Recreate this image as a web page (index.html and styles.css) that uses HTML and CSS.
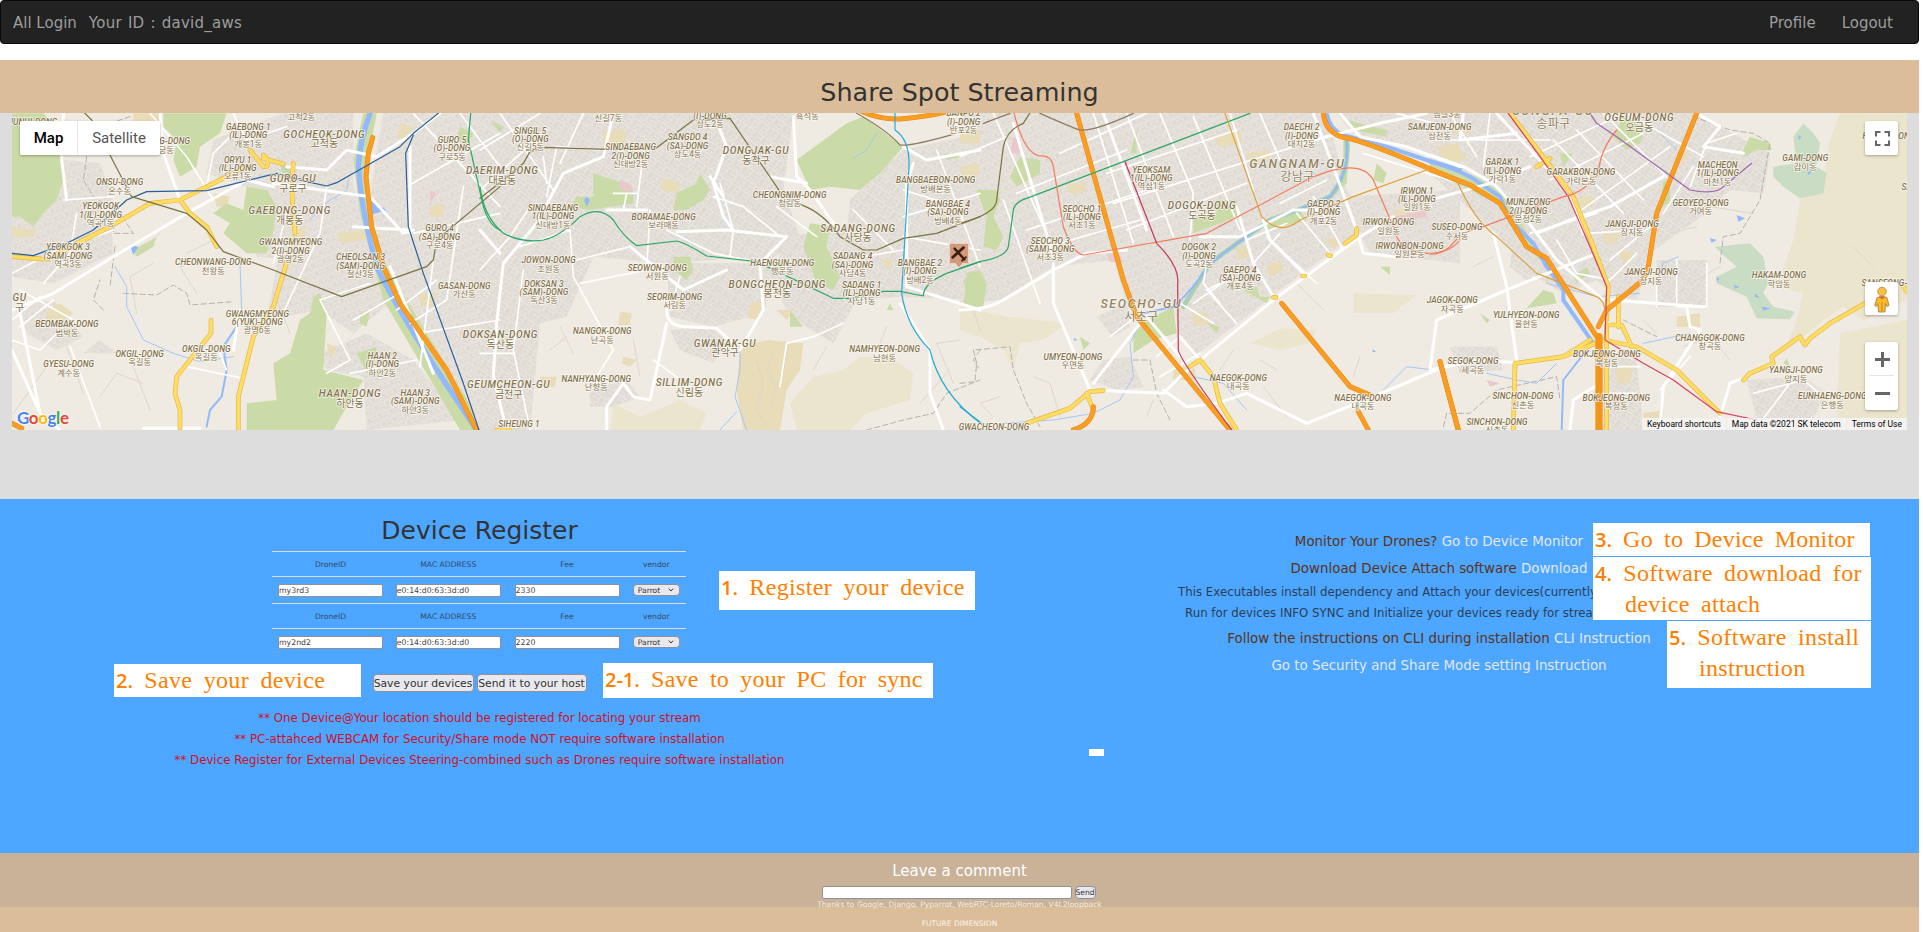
FILE: index.html
```html
<!DOCTYPE html>
<html lang="en">
<head>
<meta charset="utf-8">
<title>Share Spot Streaming</title>
<link rel="stylesheet" href="styles.css">
</head>
<body>
<div class="page">
  <nav class="navbar">
    <a class="nav-link">All Login</a>
    <span class="nav-user">Your ID : david_aws</span>
    <a class="nav-link push">Profile</a>
    <a class="nav-link">Logout</a>
  </nav>

  <header class="banner"><h1>Share Spot Streaming</h1></header>

  <section class="map-section">
    <div class="map">
      <svg class="map-canvas" id="map" viewBox="12 113 1895 317" width="1895" height="317"></svg>
      <div class="map-types"><button class="map-type active">Map</button><button class="map-type">Satellite</button></div>
      <div class="map-btn fullscreen">
        <svg width="33" height="34" viewBox="0 0 33 34"><path d="M11 15.500v-4.500h4.500M19.500 11h4.500v4.500M24 19.500v4.500h-4.500M15.500 24h-4.500v-4.500" fill="none" stroke="#666" stroke-width="2"/></svg>
      </div>
      <div class="map-btn pegman">
        <svg width="33" height="33" viewBox="0 0 33 33"><path d="M12 15.500q5-2 10 0l2 8-2 1-1.500-3-.5 8.500h-6.500l-.8-8.500-1.200 3-1.800-1z" fill="#fbb829" stroke="#a97a3c" stroke-width=".8"/><path d="M17 20v9" stroke="#c58a2a"/><path d="M13.500 14.500h7l-3.500 3z" fill="#d9652b"/><circle cx="17" cy="9.500" r="4.300" fill="#fcc13c" stroke="#b5813a" stroke-width=".8"/></svg>
      </div>
      <div class="map-btn zoom">
        <svg width="33" height="68" viewBox="0 0 33 68"><path d="M10 17.500h15M17.500 10v15M10 51.500h15" stroke="#666" stroke-width="3"/><path d="M4 33.500h25" stroke="#e6e6e6"/></svg>
      </div>
      <div class="google"><span class="b">G</span><span class="r">o</span><span class="y">o</span><span class="b">g</span><span class="g">l</span><span class="r">e</span></div>
      <div class="map-terms"><span>Keyboard shortcuts</span><span>Map data ©2021 SK telecom</span><span>Terms of Use</span></div>
    </div>
  </section>

  <main class="panel">
    <section class="register">
      <h2>Device Register</h2>
      <div class="devices">
        <div class="row head"><span>DroneID</span><span>MAC ADDRESS</span><span>Fee</span><span>vendor</span></div>
        <div class="row"><input value="my3rd3"><input value="e0:14:d0:63:3d:d0"><input value="2330"><div class="select">Parrot<svg width="6" height="4" viewBox="0 0 6 4"><path d="M.8.600L3 3 5.200.600" fill="none" stroke="#333"/></svg></div></div>
        <div class="row head"><span>DroneID</span><span>MAC ADDRESS</span><span>Fee</span><span>vendor</span></div>
        <div class="row"><input value="my2nd2"><input value="e0:14:d0:63:3d:d0"><input value="2220"><div class="select">Parrot<svg width="6" height="4" viewBox="0 0 6 4"><path d="M.8.600L3 3 5.200.600" fill="none" stroke="#333"/></svg></div></div>
      </div>
      <div class="actions"><button class="btn save">Save your devices</button><button class="btn send-host">Send it to your host</button></div>
      <div class="notices">
        <p>** One Device@Your location should be registered for locating your stream</p>
        <p>** PC-attahced WEBCAM for Security/Share mode NOT require software installation</p>
        <p>** Device Register for External Devices Steering-combined such as Drones require software installation</p>
      </div>
    </section>

    <section class="guide">
      <p class="lead">Monitor Your Drones? <a>Go to Device Monitor</a></p>
      <p class="lead">Download Device Attach software <a>Download</a></p>
      <p class="detail first">This Executables install dependency and Attach your devices(currently</p>
      <p class="detail second">Run for devices INFO SYNC and Initialize your devices ready for streaming</p>
      <p class="lead">Follow the instructions on CLI during installation <a>CLI Instruction</a></p>
      <p class="lead"><a>Go to Security and Share Mode setting Instruction</a></p>
      <div class="stub"></div>
    </section>

    <div class="note n1"><b>1.</b> Register your device</div>
    <div class="note n2"><b>2.</b> Save your device</div>
    <div class="note n21"><b>2-1.</b> Save to your PC for sync</div>
    <div class="note n3"><b>3.</b> Go to Device Monitor</div>
    <div class="note n4"><b>4.</b> Software download for<br><span class="indent">device attach</span></div>
    <div class="note n5"><b>5.</b> Software install<br><span class="indent">instruction</span></div>
  </main>

  <section class="comment">
    <h3>Leave a comment</h3>
    <form class="comment-form"><input><button type="button" class="btn">Send</button></form>
    <p>Thanks to Google, Django, Pyparrot, WebRTC-Loreto/Roman, V4L2loopback</p>
  </section>
  <footer class="footer">FUTURE DIMENSION</footer>
</div>
<script src="map.js"></script>
</body>
</html>
```

FILE: styles.css
```css
* { box-sizing: border-box; }
body { margin: 0; background: #fff; font-family: "DejaVu Sans", sans-serif; overflow: hidden; }
h1, h2, h3, p { margin: 0; font-weight: 400; }
.page { width: 1919px; height: 932px; overflow: hidden; }

.navbar { display: flex; align-items: center; height: 44px; padding: 1px 25px 0 12px; background: #222; border: 1px solid #080808; border-radius: 4px; color: #9d9d9d; font-size: 15px; margin-bottom: 16px; }
.nav-user { margin-left: 12px; letter-spacing: .25px; word-spacing: 1px; }
.push { margin-left: auto; margin-right: 26px; }

.banner { height: 53px; background: #dbbd9a; text-align: center; }
.banner h1 { font-size: 25.400px; line-height: 31px; padding-top: 17px; color: #333; }

.map-section { height: 386px; padding: 0 12px; background: #ddd; }
.map { position: relative; width: 1895px; height: 317px; overflow: hidden; background: #efebe2; }
.map-canvas { display: block; }
.map-types { position: absolute; left: 8px; top: 8px; display: flex; box-shadow: 0 1px 3px rgba(0,0,0,.3); border-radius: 2px; }
.map-type { border: 0; height: 34px; width: 82px; padding: 0; background: #fff; color: #565656; font: 15px Roboto, sans-serif; border-radius: 0 2px 2px 0; }
.map-type.active { width: 58px; color: #000; font-weight: 500; border-right: 1px solid #e6e6e6; border-radius: 2px 0 0 2px; }
.map-btn { position: absolute; left: 1853px; width: 33px; background: #fff; border-radius: 2px; box-shadow: 0 1px 3px rgba(0,0,0,.3); }
.map-btn svg { display: block; }
.fullscreen { top: 8px; height: 34px; }
.pegman { top: 169px; height: 33px; }
.zoom { top: 229px; height: 68px; }
.google { position: absolute; left: 5px; bottom: 1px; font: 17px/22px Lato, sans-serif; font-weight: 700; letter-spacing: -.4px; text-shadow: 0 0 2px #fff, 0 0 2px #fff; }
.google .b { color: #4285f4; } .google .r { color: #ea4335; } .google .y { color: #fbbc05; } .google .g { color: #34a853; }
.map-terms { position: absolute; right: 0; bottom: 0; display: flex; justify-content: flex-end; height: 12px; gap: 1px; font: 8.500px/12px Roboto, sans-serif; color: #000; white-space: nowrap; }
.map-terms span { background: rgba(245,245,245,.75); padding: 0 5px; }

.panel { position: relative; display: grid; grid-template-columns: 959px 960px; height: 354px; background: #4da6ff; }
.register { padding-top: 16px; }
.register h2 { text-align: center; font-size: 25px; line-height: 31px; color: #333; }
.devices { width: 414px; margin: 5px auto 0 272px; font-size: 7.600px; }
.row { display: grid; grid-template-columns: 117px 118.500px 119px 59.500px; height: 27px; border-top: 1px solid #ddd; padding-top: 7px; justify-items: center; color: #333; }
.row.head { height: 25px; padding-top: 0; line-height: 25px; color: #2f4a68; }
.row input, .comment-form input { width: 105px; height: 13px; padding: 0; border: 1px solid #8f8f9d; border-radius: 2px; background: #fff; font: 7.800px "DejaVu Sans", sans-serif; color: #444; outline: 0; }
.select { display: flex; align-items: center; justify-content: space-between; width: 47px; height: 12px; padding: 0 5px 0 4px; border: 1px solid #8f8f9d; border-radius: 4px; background: #e9e9ed; color: #333; }
.actions { display: flex; justify-content: center; gap: 3px; margin-top: 19px; }
.btn { border: 1px solid #8f8f9d; border-radius: 4px; background: #e9e9ed; color: #333; padding: 0; font-family: inherit; white-space: nowrap; }
.actions .btn { height: 18px; width: 101px; font-size: 10.800px; line-height: 17px; }
.actions .send-host { width: 110px; }
.notices { margin-top: 16px; text-align: center; font-size: 11.800px; line-height: 21px; color: #cf1126; }

.guide { padding-top: 29px; text-align: center; white-space: nowrap; }
.lead { font-size: 13.400px; line-height: 27px; color: #5c3317; }
.lead a { color: #e3e8f0; }
.detail { text-align: left; margin-left: 219px; font-size: 11.800px; line-height: 20px; color: #2b3f55; }
.detail.second { margin-left: 226px; line-height: 23px; }
.stub { width: 15px; height: 7px; margin: 70px 0 0 130px; background: #fff; }

.note { position: absolute; background: #fff; color: #ff8000; font: 24px/31px "Liberation Serif", serif; letter-spacing: .35px; word-spacing: 5px; white-space: nowrap; padding: 1px 0 0 2px; }
.note b { font: 600 20px "Open Sans", sans-serif; letter-spacing: 0; }
.indent { margin-left: 30px; }
.n1 { left: 719px; top: 72px; width: 256px; height: 39px; }
.n2 { left: 114px; top: 165px; width: 247px; height: 33px; }
.n21 { left: 603px; top: 164px; width: 330px; height: 35px; letter-spacing: .25px; }
.n3 { left: 1593px; top: 24px; width: 277px; height: 33px; letter-spacing: .2px; }
.n4 { left: 1593px; top: 58px; width: 278px; height: 63px; }
.n5 { left: 1667px; top: 122px; width: 204px; height: 67px; }

.comment { height: 54px; padding-top: 9px; background: #c9b297; text-align: center; color: #fff; }
.comment h3 { font-size: 15px; line-height: 18px; }
.comment-form { display: flex; justify-content: center; gap: 3px; margin: 6px 2px 0 0; }
.comment-form input { width: 250px; }
.comment-form .btn { width: 21px; height: 13px; font-size: 7.600px; line-height: 12px; }
.comment p { font-size: 7.600px; line-height: 11px; color: #f6ece0; position: relative; }
.footer { height: 25px; background: #dbbd9a; text-align: center; font-size: 7.500px; line-height: 33px; color: #fbf3e8; }

.streets path { fill: none; stroke-linecap: round; stroke-linejoin: round; }
.labels text { font-family: Roboto, "Noto Sans CJK KR", sans-serif; font-weight: 500; text-anchor: middle; fill: #84724e; stroke: #fbf9f3; stroke-width: 4px; stroke-linejoin: round; paint-order: stroke; }
.labels .en { font-style: italic; }
.labels .ko { font-weight: 400; }
```

FILE: map.js
```js
// Map sheets: each sheet has its own origin; units are a third of a pixel.
const origins = [[0, 0], [480, 50], [960, 50], [1430, 0]];

const layers = [
  { fill: '#ebe5cd', items: [
    [1, 'M400 1060L480 1100 600 1050 680 1090 660 1140 390 1140Z M930 1060L1000 980 1090 960 1140 920 1240 930 1300 970 1290 1050 1160 1090 1110 1140 950 1140Z'],
    [2, 'M0 760L40 780 150 800 320 820 250 870 180 880 160 960 130 900 60 860 0 840Z M870 880L960 835 1070 840 1050 880 960 900Z M1180 730L1370 735 1300 790 1180 790Z'],
    [3, 'M1230 340H1431V900L1300 960 1240 920 1180 960 1060 1060 1100 960 1120 880 1040 860 1090 720 1110 600 1180 540 1200 420Z M1230 1000L1431 960V1255H1220Z'] ] },
  { fill: '#dfdad4', items: [
    [0, 'M36 580L170 570 330 640 340 760 160 850 36 830Z M190 480L300 490 340 600 230 640 180 600Z M640 420L850 340 1060 340 1060 640 900 780 770 770 740 560 620 520Z M860 640L1060 560 1140 740 1180 900 1060 1000 960 930 800 960Z M1150 340L1500 340 1500 1290 1430 1290 1160 850 1110 600 1130 450Z M960 1060L1100 1000 1240 1080 1380 1260 1100 1290 1090 1130 980 1110Z M60 920L160 900 250 1010 170 1050 80 1000Z M300 1020L350 1060 250 1060Z'],
    [1, 'M0 190L690 190 700 540 900 570 840 620 560 640 340 620 260 800 180 820 150 1140 0 1140Z M470 190L940 190 910 420 960 560 860 640 560 560 460 480Z M560 640L900 640 850 790 700 830 570 800Z M910 560L1060 540 1260 560 1260 740 1130 750 1060 880 930 800 880 700Z M1110 450L1270 300 1500 250 1500 750 1260 740 1100 560Z M330 1020L440 990 480 1040 400 1070 330 1070Z M570 840L690 830 740 870 700 940 600 900Z'],
    [2, 'M0 190L1100 190 1160 420 1230 520 940 735 860 800 700 920 660 860 640 760 500 760 460 630 280 650 120 750 0 760Z M430 930L510 920 550 1010 470 1020 390 990Z M1130 190L1500 190 1500 340 1180 250Z M1140 440L1500 420 1500 640 1230 610Z M410 800L500 760 510 830 460 860Z'],
    [3, 'M0 340L790 340 1020 460 1000 580 900 570 800 660 660 760 620 900 540 880 500 840 400 880 300 820 200 700 0 520Z M680 780L830 780 830 920 680 920Z M500 1060L620 1080 640 1290 510 1290Z M60 1040L200 1040 220 1110 90 1120Z M950 1140L1120 1130 1190 1180 1150 1255 980 1255Z M250 720L330 760 300 850 240 800Z'] ] },
  { fill: '#e9dcb9', items: [
    [0, 'M400 340L480 340 480 365 400 365Z M36 680L110 690 100 710 36 710Z M140 930L180 910 220 940 190 960 140 960Z M640 580L690 590 680 620 650 620Z M1200 370L1240 380 1220 430 1190 410Z M1010 700L1100 690 1100 720 1020 730Z M880 690L920 680 900 740 870 730Z M1290 620L1330 610 1330 650 1290 650Z M980 1030L1010 1040 990 1080Z M1260 880L1310 880 1300 920 1260 920Z'],
    [1, 'M780 890L860 870 970 880 960 960 920 1020 900 1140 790 1140 770 1020Z M370 240L440 240 430 300 370 300Z M420 785L455 790 450 825 415 825Z M550 385L600 400 590 430 540 420Z M810 760L850 750 840 810 805 805Z M430 920L470 930 450 950 425 940Z M890 780L940 780 920 810Z M180 980L230 980 225 1010 190 1010Z M1200 630L1240 630 1230 660Z M1440 250L1500 240 1500 280 1440 280Z'],
    [2, 'M0 350L50 340 60 370 10 390Z M760 265L840 240 850 280 780 290Z M320 400L380 400 370 430 330 430Z M700 790L740 785 750 820 700 830Z M860 310L930 300 930 330 870 340Z M640 960L700 940 710 990 640 990Z M1300 480L1360 470 1350 510 1300 500Z M1090 570L1130 560 1130 600Z M830 590L870 590 880 620 830 630Z M920 650L960 630 970 660 930 680Z'],
    [3, 'M60 370L130 370 120 400 70 400Z M740 950L810 940 810 980 740 980Z M520 700L570 700 560 730 520 730Z M20 440L80 430 110 480 40 490Z M740 460L780 450 760 490Z M560 1100L610 1090 600 1150 560 1150Z M640 1240L700 1230 700 1255 640 1255Z M440 590L490 590 490 620 450 620Z M570 750L610 760 600 790 570 780Z'] ] },
  { fill: '#cadba7', items: [
    [0, 'M36 440L180 450 190 540 170 600 130 640 100 680 60 650 36 650Z M36 340L130 340 180 400 180 460 36 440Z M490 340L680 340 660 400 600 440 590 500 540 530 520 480 530 420 490 380Z M740 560L800 570 830 620 820 690 800 760 740 760 670 700 690 670 640 640 680 610 730 630Z M960 880L980 940 970 1110 1090 1140 1040 1220 1000 1290 740 1290 740 1210 830 1200 820 1090 870 1060 900 960 930 940 940 890Z M1070 1060L1130 1040 1120 1100 1100 1120Z M1080 940L1110 930 1100 980 1080 970Z M1090 340L1130 340 1100 500 1110 640 1160 800 1420 1230 1430 1290 1380 1290 1150 900 1080 640 1060 480Z M400 750L470 710 460 740 410 770Z M1380 380L1420 400 1400 440 1370 420Z M840 490L880 500 890 540 850 540Z'],
    [1, 'M950 330L1100 220 1150 200 1270 290 1200 370 1140 420 1050 410 990 420Z M340 370L430 400 460 420 460 460 330 480 270 470 290 440 340 440Z M590 430L650 400 660 370 690 420 670 450 620 480 580 480Z M990 520L1050 530 1040 590 1080 680 1060 720 1010 700 970 590Z M580 620L630 620 640 660 620 690 580 660Z M1460 670L1500 660 1500 775 1450 770Z M30 210L70 230 60 250Z M930 780L960 820 970 830 930 830Z M1390 310L1450 320 1400 330Z M1230 760L1240 780 1220 780Z'],
    [2, 'M50 420L110 420 120 450 100 500 130 560 110 600 70 590 80 500Z M10 690L60 660 80 700 70 770 30 775Z M180 320L240 330 240 370 170 410 150 380Z M560 810L640 770 650 850 580 870 520 910 520 850Z M770 450L830 450 830 500 700 550 700 500 770 490Z M1160 210L1280 240 1280 260 1180 240Z M1250 340L1280 370 1270 400 1240 390Z M1260 650L1290 650 1290 675Z M910 520L1020 480 1040 510 920 540Z M360 860L390 880 370 900Z M1150 270L1170 280 1160 400 1100 460 1150 370Z M850 720L890 710 900 740 930 740 920 760Z M530 240L530 310 510 310Z M740 820L780 830 770 850Z'],
    [3, 'M580 350L620 370 640 400 630 430 590 450 550 410Z M30 490L140 530 230 590 320 750 360 770 330 780 270 720 220 620 100 560 0 510V480Z M700 540L720 560 720 610 690 620Z M340 870L370 880 380 910 290 925Z M940 450L960 410 1020 430 1025 450 980 450 940 470Z M1070 1075L1080 1100 1060 1090Z M430 830L470 800 480 820 440 850Z M150 940L180 960 170 970Z M390 460L430 460 400 500Z'] ] },
  { fill: '#c9dcc4', items: [[3, 'M1120 370L1150 400 1170 430 1160 500 1190 520 1180 580 1110 595 1060 560 1030 530 1030 500 1100 490 1090 410Z M855 740L960 730 1000 770 1015 850 1000 880 1030 920 1095 935 1080 958 980 955 950 890 860 850 860 830 920 800 880 765Z']] },
  { fill: '#e9c9cc', items: [[0, 'M1290 570L1310 580 1290 610Z'], [1, 'M420 390L450 400 460 425 420 420Z'], [2, 'M160 260L180 270 180 310 150 310Z M440 610L480 615 490 635 450 635Z M1300 500L1400 480 1400 500 1320 515Z'], [3, 'M170 1140L210 1150 180 1160Z']] },
  { fill: '#91b9fb', items: [[0, 'M1110 600L1160 630 1110 645Z M390 735L415 740 400 765Z'], [1, 'M320 440L330 450 320 470 312 450Z'], [3, 'M920 645L945 655 925 665Z M840 715L860 720 845 728Z M1105 405L1115 412 1105 420Z M1130 510L1145 515 1135 525Z M860 830L868 838 860 845Z M912 855L928 860 915 866Z M975 880L990 895 975 890Z M995 920L1022 925 1000 932Z'], [2, 'M1238 898L1248 905 1238 907Z M342 864L352 870 342 872Z']] }
];

const lines = [
  { color: '#91b9fb', w: 16, items: [[0, 'M1110 340Q1080 420 1075 500 1085 640 1130 800 1200 950 1430 1290']] },
  { color: '#91b9fb', w: 12, items: [[2, 'M1100 190Q1110 240 1150 255L1280 290 1400 330 1500 360'], [3, 'M0 485Q60 500 120 530L210 590 240 660 310 730 350 800 400 870 400 900 490 1030']] },
  { color: '#a9cfb5', w: 14, items: [[2, 'M1160 270Q1170 370 1110 440 1020 480 930 510 830 580 750 640 700 720 670 770']] },
  { color: '#91b9fb', w: 6, items: [[0, 'M710 980L670 1040 680 1110 665 1190 630 1230 620 1280'], [2, 'M1160 270Q1170 370 1110 440 1020 480 930 510 830 580 750 640 700 720 640 770L550 790'], [3, 'M470 1050L400 1140 395 1290']] },
  { color: '#a5c5f8', w: 3, items: [
    [0, 'M345 800L380 860 380 920 430 1020 520 1060 600 1085 700 1070 M720 790L725 930 M930 660L960 620 1040 570 1045 540 M840 490L880 530'],
    [1, 'M780 890L780 960 765 1040 800 1140 M1190 250L1160 300 1120 325 M720 1140L770 1085'],
    [2, 'M550 800L510 880 520 980 480 1050 400 1090 280 1110 130 1120 M700 980L790 1000 860 1080 M1270 1020L1340 950 1420 960'],
    [3, 'M170 1120L260 1140 320 1150 380 1090 M690 400L740 450 M350 850L500 890 630 880 M640 1030L780 1000 M690 820L700 790 745 770'] ] },
  { color: '#ddd6c9', w: 3, items: [
    [0, 'M400 770L480 700 M410 940L390 830 460 790 M560 760L640 720 M250 1180L200 1040 M430 1150L350 1120 300 1190 M450 1230L400 1100 M870 1000L830 900 M40 1240L140 1100 M590 880L540 800 580 790'],
    [1, 'M210 900L260 860 M280 910L240 830 M460 870L480 980 M1040 890L1000 960 M1220 830L1200 880 M1420 1000L1370 880 1440 870 M1320 1060L1400 970 M830 930L850 1000 830 1080 860 1130 M880 900L860 960 890 1010 870 1080 M920 900L910 970'],
    [2, 'M100 1100L60 1060 120 1040 M300 1100L270 1000 220 980 M820 900L780 960 M910 1010L980 1100 M1090 780L1010 700 M950 960L900 930 M1200 920L1180 980 M60 840L40 780 M580 1050L560 1100'],
    [3, 'M840 620L970 640 M720 700L800 680 M130 800L190 770 M760 1040L820 1020 M870 480L900 540 M680 1000L640 960 M1330 800L1270 740 M900 1080L850 1020 M780 850L870 800 M0 900L100 920'] ] },
  { color: '#b5b2ad', w: 3, dash: '16 9', items: [[0, 'M390 350L330 370 M260 470L250 540 280 590 340 630 340 700 400 700 360 640 M345 740L330 860 M370 880L470 885 520 855 560 880 570 915 700 905 M310 930L280 900 300 840'], [1, 'M1160 1140L1270 1110 1360 1090 1400 1030 1500 990 M1500 900L1480 930 1500 960'], [2, 'M0 1000L45 995 50 940 40 900 100 895 150 890 160 960 200 1060 240 1130 M520 930L570 930 590 1030 630 1110'], [3, 'M790 350L900 390 970 400 1020 430 990 600 930 700 880 710 870 790 M580 960L680 1010 M40 1280L50 1240 120 1240 200 1170 380 1130 390 1200']] },
  { color: '#fff', w: 5, items: [
    [0, 'M190 600L340 590 M36 820L150 760 340 690 M230 640L210 760 130 850 M60 980L160 900 M36 1020L120 1050 170 1000 M450 340L560 470 640 600 M700 340L740 420 860 380 M820 790L860 640 M980 560L960 700 840 960 M1110 850L960 900 1050 1080 980 1120 M1060 960L1200 880 M1240 340L1500 620 M1220 560L1500 400 M1240 700L1500 640 M1300 780L1260 1100 M1390 560L1340 900 1230 970 M1190 930L1310 840 M1050 1120L1250 1080 M1250 1000L1500 960 M60 870L220 960 M210 1040L300 1280 M660 1060L680 1110 M560 1100L730 1135 M36 960L120 890 M1380 340L1500 500 M620 560L640 460 700 400'],
    [1, 'M0 300L180 190 M0 420L200 240 M60 190L220 420 M0 660L90 560 150 470 M190 320L200 400 M310 190L240 340 M490 310L470 470 M400 430L470 430 M440 430L430 480 M120 590L270 540 280 680 400 900 350 980 M130 660L100 900 150 1140 M0 910H100 M300 700L500 660 510 480 M290 630L450 590 M630 1010L520 930 M600 680L570 780 M560 540L700 610 850 640 M720 400L760 540 750 620 M700 440L790 470 900 560 M890 470L1010 560 M1120 480L1240 600 M1270 420L1400 460 M1270 500L1500 430 M1270 560L1500 600 M1370 300L1500 650 M1150 620L1270 600 M900 1010L920 880 1000 860 1090 820 M360 300L230 290 200 440'],
    [2, 'M0 320L140 260 M100 190L290 620 M130 450L240 760 M170 430L500 300 M200 540L560 420 M230 600L540 510 M400 190L520 580 M500 190L640 560 M600 190L700 430 690 570 M700 200L840 540 M810 190L880 420 M900 190L960 330 M300 310L560 190 M440 370L830 240 M460 460L1100 260 M500 540L860 400 M960 460L1100 390 M860 570L980 520 M880 640L960 550 M920 560L1070 700 M1010 490L1110 610 M1060 440L1150 600 M820 680L740 720 830 820 M700 760L800 690 M740 640L730 700 780 760 M660 760L760 820 M450 860L540 790 M1210 310L1500 400 M1310 190L1500 240 M590 920L660 860 M600 980L720 910'],
    [3, 'M0 420L360 420 M60 340L140 470 M180 340L160 500 M300 470L560 350 M360 540L640 400 M440 640L720 440 M470 700L640 690 M540 780L660 680 M370 420L580 640 M440 390L640 600 M520 340L720 540 M590 340L820 470 M780 560L830 430 920 400 M700 640L790 500 M380 720L440 820 540 840 M300 700L500 640 M620 760L530 850 M680 830L680 920 M740 780L740 920 830 920 830 790 M520 1100L630 1100 M520 1180L620 1180 M690 1170L780 1070 M970 1180L1120 1140 1180 1190 M1000 1255L1080 1150'] ] },
  { color: '#fff', w: 9, items: [
    [0, 'M190 340L185 480 200 600 M36 930L160 880 340 770 560 640 740 540 820 560 M480 340L490 460 540 600 M860 500L980 510 1040 450 1130 470 1240 400 1320 340 M820 550L1110 590 1210 700 1240 690 M36 1050L120 1240 180 1290 M60 940L120 1240 M1230 440L1230 700 M720 930L700 1050 M430 1285L600 1285 M1170 800L1300 1120 M1060 680L1230 690'],
    [1, 'M0 540L60 610 M400 190L370 320 250 370 170 520 70 640 50 820 40 980 80 1140 M700 190L740 290 700 400 730 500 760 540 M690 380L730 440 M940 200L950 380 990 420 1060 520 M870 380L980 400 M590 545L740 540 920 560 840 640 850 780 780 900 M500 480L380 480 M450 590L610 720 740 660 M560 780Q560 830 620 830 L710 835 760 880 M560 820L530 960 510 1050 460 1040 430 1000 380 1070 380 1140 M1270 290L1340 330 1500 300 M1300 340L1280 400 1280 710 1500 780 M1260 760L1350 900 1350 1030 1390 1140'],
    [2, 'M0 780Q80 780 130 750L280 660 380 610 500 600 M280 640L280 760 390 1020 610 1030 660 980 940 750 1200 560 1300 500 M430 190L560 540 M160 220L280 620 M720 560L840 560 1000 480 1080 480 M830 470L880 640 940 740 M910 510L930 570 1040 680 M1060 190L1190 540 1210 610 1310 620 M1140 190L1200 260 1340 290 1500 350 M540 820L400 1000 M560 800L660 920 M610 1020L680 1070 770 1060 860 1030 1040 1120 1240 1040 1500 930 M660 860L720 930 M1060 270L1260 220 1400 190'],
    [3, 'M0 465L100 500 190 550 290 660 380 780 520 900 M100 340L90 420 260 400 M0 600L180 550 300 500 M200 340L420 580 460 700 M320 700L420 660 540 620 700 530 M190 700L230 860 260 1080 M0 1110L20 960 230 870 500 760 M420 1290L430 1200 510 1150 M540 900L820 920 M770 920L780 980 810 990 700 1160 690 1290 M800 340L870 380 820 440 940 460 M870 1250L900 1150 950 1130 M0 1110L150 1080 280 1090'] ] },
  { color: '#e5b74a', w: 14, top: '#ffdc62', tw: 10, items: [
    [0, 'M36 770L140 778 M230 730L330 680 M140 778L330 680 450 610 540 600 M540 600L620 560 750 495 M540 600L570 640 620 680 650 740 M750 450L790 500 M790 465Q810 480 800 500 M790 475L850 492 M880 490Q870 590 885 700 M862 780L820 920 760 1010 715 1190 715 1290 M633 960V1000L530 1130 525 1180 540 1230V1285'],
    [1, 'M50 1140L90 1140'],
    [2, 'M200 1120L330 1075 390 1025 430 1022 M380 1030L400 1080 M690 950L720 930 760 980 780 1060 830 1140 M1155 580L1190 555V535 M1105 615L1112 617 M1028 678H1035 M940 742H948'],
    [3, 'M240 340L340 470 430 590 490 740 535 860 530 960 M320 500L360 475 M250 1290L255 1090 400 1070 520 1020 620 1040 740 1110 870 1240 M540 975L575 975 605 1040 M565 890V980 M530 975L530 1290 M940 1140L960 1120 1030 1090 1025 1070 1110 1010 1125 1035 1140 1015 1200 970 1305 910 M1420 860L1431 875 M480 1020L400 1070'] ] },
  { color: '#e68815', w: 15, top: '#fb9d22', tw: 12, items: [
    [0, 'M1118 413L1105 460 1098 530 1115 680 1150 800 1200 910 1340 1110 1430 1290 M36 1270L65 1285'],
    [1, 'M1135 180Q1200 210 1260 207 1350 200 1420 180'],
    [2, 'M350 190L400 370 490 690 530 800 810 1140 M965 760L1170 1010 1230 1035 M1195 1085L1225 1140 M1440 935L1500 1160 M1090 180Q1090 250 1160 265 1210 270 1500 395 M400 1070Q400 1120 340 1140'],
    [3, 'M0 508L120 555 210 610 290 740 350 775 500 1010 M800 340L680 640 655 800 640 840 530 930 505 980 M30 1085L85 1290'] ] },
  { color: '#f39518', w: 22, items: [[3, 'M507 1010V1290']] }
];

const rails = [
  ['#285f9d', 0, 'M36 760L100 767 200 730 280 690 380 600 440 575 620 572 830 520 920 545 980 558 1010 548 1200 440 1240 400 1315 340 M1240 405L1217 460 1225 680 1270 820 1390 1150 1437 1290'],
  ['#7a7441', 0, 'M250 335L275 360 395 590 560 640 620 690 670 755 820 810 1025 890 1280 800 1300 780 1310 720 1500 560'],
  ['#2ba866', 0, 'M1412 340L1405 420 1450 620Q1470 680 1500 690'],
  ['#7a7441', 1, 'M0 445L70 390 130 340 150 305 190 292 380 298 530 293 640 210 750 205 900 425 970 467Q1030 490 1080 560L1150 600 1190 600 1270 565 1370 550 1500 500'],
  ['#2ba866', 1, 'M0 410Q10 500 70 550 130 580 190 570 240 560 300 500 360 465 400 510 430 560 470 587 530 580 590 573 620 580 680 618L830 635 1060 745 1110 745 1210 724 1260 724 1330 738Q1330 700 1400 670L1500 635'],
  ['#28abd8', 1, 'M1245 190V240Q1290 270 1287 350L1265 730Q1280 830 1350 900 1380 1030 1500 1118'],
  ['#8b7c60', 1, 'M1130 190Q1220 240 1260 285 1290 290 1430 250'],
  ['#7a7441', 2, 'M0 520Q110 490 110 450L130 290Q140 240 190 220L215 180'],
  ['#2ba866', 2, 'M0 655L60 635Q140 620 145 590L160 480Q165 455 200 445L490 335 870 190'],
  ['#f47c5c', 2, 'M160 180Q190 310 240 318 275 315 280 350L310 530Q340 610 370 615L740 550 1050 385Q1200 320 1240 390L1300 530 Q1310 600 1400 610 1470 610 1500 570'],
  ['#8b7c60', 2, 'M240 190Q330 230 360 240 400 245 520 190 M70 220L150 190'],
  ['#e0a038', 2, 'M795 190L905 500Q960 560 1020 510L1180 440 1400 360'],
  ['#c6365c', 2, 'M495 335L590 580Q660 650 653 700L655 900 Q660 930 815 1140'],
  ['#28abd8', 2, 'M0 1070L65 1120'],
  ['#d9415d', 3, 'M235 340L330 470 415 590 480 740 530 860 525 1020 640 1090 730 1140 860 1235 980 1260'],
  ['#f47c5c', 3, 'M560 390Q510 450 505 520 460 580 400 590L160 680 Q100 690 60 740 30 765 0 762'],
  ['#a364ae', 3, 'M480 340L500 370 560 410 780 570Q860 585 880 560L965 490'],
  ['#dba042', 3, 'M80 540Q130 660 200 710L320 820 500 890Q525 900 525 940']
];

// sheet, x, y, size (s / m / l), lines
const labels = [
  [0,100,366,'s','JUNUI-DONG'],[0,905,350,'s','고척2동'],[0,500,424,'s','GUNG-DONG|궁동'],
  [0,746,381,'s','GAEBONG 1|(IL)-DONG|개봉1동'],[0,974,402,'m','GOCHEOK-DONG|고척동'],[0,714,479,'s','ORYU 1|(IL)-DONG|오류1동'],
  [0,360,547,'s','ONSU-DONG|온수동'],[0,880,535,'m','GURO-GU|구로구'],[0,303,619,'s','YEOKGOK|1(IL)-DONG|역곡1동'],[0,870,632,'m','GAEBONG-DONG|개봉동'],
  [0,205,742,'s','YEOKGOK 3|(SAM)-DONG|역곡3동'],[0,873,727,'s','GWANGMYEONG|2(I)-DONG|광명2동'],[0,641,787,'s','CHEONWANG-DONG|천왕동'],
  [0,1083,772,'s','CHEOLSAN 3|(SAM)-DONG|철산3동'],[0,1320,685,'s','GURO 4|(SA)-DONG|구로4동'],[0,1357,420,'s','GURO 5|(O)-DONG|구로5동'],
  [0,1394,857,'s','GASAN-DONG|가산동'],[0,202,973,'s','BEOMBAK-DONG|범박동'],[0,773,941,'s','GWANGMYEONG|6(YUK)-DONG|광명6동'],[0,420,1061,'s','OKGIL-DONG|옥길동'],
  [0,620,1046,'s','OKGIL-DONG|옥길동'],[0,207,1093,'s','GYESU-DONG|계수동'],[0,1148,1068,'s','HAAN 2|(I)-DONG|하안2동'],[0,1051,1181,'m','HAAN-DONG|하안동'],
  [0,1247,1179,'s','HAAN 3|(SAM)-DONG|하안3동'],[0,60,892,'m','GU|구'],
  [1,386,204,'s','신길7동'],[1,152,242,'s','SINGIL 5|(O)-DONG|신길5동'],[1,68,362,'m','DAERIM-DONG|대림동'],[1,453,292,'s','SINDAEBANG|2(I)-DONG|신대방2동'],
  [1,691,197,'s','(I)-DONG|상도2동'],[1,624,262,'s','SANGDO 4|(SA)-DONG|상도4동'],[1,829,302,'m','DONGJAK-GU|동작구'],[1,983,198,'s','흑석동'],[1,1452,190,'s','BANPO 2|(I)-DONG|반포2동'],
  [1,930,434,'s','CHEONGNIM-DONG|청림동'],[1,1368,391,'s','BANGBAEBON-DONG|방배본동'],[1,220,474,'s','SINDAEBANG|1(IL)-DONG|신대방1동'],[1,552,501,'s','BORAMAE-DONG|보라매동'],
  [1,1135,534,'m','SADANG-DONG|사당동'],[1,1405,462,'s','BANGBAE 4|(SA)-DONG|방배4동'],[1,207,631,'s','JOWON-DONG|조원동'],[1,533,654,'s','SEOWON-DONG|서원동'],[1,908,639,'s','HAENGUN-DONG|행운동'],
  [1,1119,619,'s','SADANG 4|(SA)-DONG|사당4동'],[1,1321,639,'s','BANGBAE 2|(I)-DONG|방배2동'],[1,193,701,'s','DOKSAN 3|(SAM)-DONG|독산3동'],[1,893,702,'m','BONGCHEON-DONG|봉천동'],
  [1,1146,704,'s','SADANG 1|(IL)-DONG|사당1동'],[1,585,741,'s','SEORIM-DONG|서림동'],[1,368,844,'s','NANGOK-DONG|난곡동'],[1,62,854,'m','DOKSAN-DONG|독산동'],[1,736,879,'m','GWANAK-GU|관악구'],
  [1,1215,898,'s','NAMHYEON-DONG|남현동'],[1,350,986,'s','NANHYANG-DONG|난향동'],[1,87,1004,'m','GEUMCHEON-GU|금천구'],[1,629,998,'m','SILLIM-DONG|신림동'],[1,118,1123,'s','SIHEUNG 1'],
  [2,1026,232,'s','DAECHI 2|(I)-DONG|대치2동'],[2,1440,232,'s','SAMJEON-DONG|삼전동'],[2,575,359,'s','YEOKSAM|1(IL)-DONG|역삼1동'],[2,1013,340,'l','GANGNAM-GU|강남구'],
  [2,1372,422,'s','IRWON 1|(IL)-DONG|일원1동'],[2,367,476,'s','SEOCHO 1|(IL)-DONG|서초1동'],[2,727,467,'m','DOGOK-DONG|도곡동'],[2,1092,462,'s','GAEPO 2|(I)-DONG|개포2동'],
  [2,1287,517,'s','IRWON-DONG|일원동'],[2,272,572,'s','SEOCHO 3|(SAM)-DONG|서초3동'],[2,718,592,'s','DOGOK 2|(I)-DONG|도곡2동'],[2,1350,588,'s','IRWONBON-DONG|일원본동'],
  [2,841,659,'s','GAEPO 4|(SA)-DONG|개포4동'],[2,545,762,'l','SEOCHO-GU|서초구'],[2,340,920,'s','UMYEON-DONG|우면동'],[2,836,983,'s','NAEGOK-DONG|내곡동'],[2,1210,1043,'s','NAEGOK-DONG|내곡동'],[2,103,1132,'s','GWACHEON-DONG'],
  [3,371,333,'l','SONGPA-GU|송파구'],[3,629,352,'m','OGEUM-DONG|오금동'],[3,52,342,'s','잠실3동'],[3,1127,475,'s','GAMI-DONG|감이동'],[3,218,487,'s','GARAK 1|(IL)-DONG|가락1동'],[3,454,517,'s','GARAKBON-DONG|가락본동'],
  [3,864,495,'s','MACHEON|1(IL)-DONG|마천1동'],[3,296,607,'s','MUNJEONG|2(I)-DONG|문정2동'],[3,813,609,'s','GEOYEO-DONG|거여동'],[3,82,682,'s','SUSEO-DONG|수서동'],[3,607,672,'s','JANGJI-DONG|장지동'],
  [3,664,817,'s','JANGJI-DONG|장지동'],[3,1048,826,'s','HAKAM-DONG|학암동'],[3,68,901,'s','JAGOK-DONG|자곡동'],[3,290,946,'s','YULHYEON-DONG|율현동'],[3,841,1014,'s','CHANGGOK-DONG|창곡동'],
  [3,532,1063,'s','BOKJEONG-DONG|복정동'],[3,130,1084,'s','SEGOK-DONG|세곡동'],[3,1099,1111,'s','YANGJI-DONG|양지동'],[3,280,1189,'s','SINCHON-DONG|신촌동'],[3,560,1193,'s','BOKJEONG-DONG|복정동'],
  [3,1208,1189,'s','EUNHAENG-DONG|은행동'],[3,202,1266,'s','SINCHON-DONG|신촌동'],[3,1364,850,'s','SANSEONG-|산성리'],[3,1378,407,'s','HASAN-DONG'],[3,1440,560,'s','SAN']
];

// font size, line height, letter spacing
const sizes = { s: [25, 25, .3], m: [30, 29, 2], l: [37, 39, 5] };
const at = (s, inner) => `<g transform="translate(${origins[s]}) scale(.33333)">${inner}</g>`;
let out = `<defs>
<pattern id="blocks" width="36" height="26" patternUnits="userSpaceOnUse" patternTransform="rotate(-24)"><path d="M0 0H36M0 9H36M0 18H22M0 0V26M12 0V9M22 9V26M30 0V9" stroke="#f4f1ea" stroke-width="1.800" fill="none"/></pattern>
<pattern id="blocks2" width="32" height="34" patternUnits="userSpaceOnUse" patternTransform="rotate(34)"><path d="M0 0H32M0 11H32M0 23H18M0 0V34M18 11V34M10 0V11" stroke="#f4f1ea" stroke-width="1.800" fill="none"/></pattern>
</defs><rect x="12" y="113" width="1895" height="317" fill="#efebe2"/>`;

layers.forEach((l, i) => {
  l.items.forEach(([s, d]) => {
    out += at(s, `<path d="${d}" fill="${l.fill}"/>`);
    if (i === 1) out += at(s, `<path d="${d}" fill="url(#${s % 2 ? 'blocks2' : 'blocks'})"/>`);
  });
});
out += '<g class="streets">';
lines.forEach(l => {
  l.items.forEach(([s, d]) => { out += at(s, `<path d="${d}" stroke="${l.color}" stroke-width="${l.w}" ${l.dash ? `stroke-dasharray="${l.dash}"` : ''}/>`); });
  if (l.top) l.items.forEach(([s, d]) => { out += at(s, `<path d="${d}" stroke="${l.top}" stroke-width="${l.tw}"/>`); });
});
rails.forEach(([c, s, d]) => { out += at(s, `<path d="${d}" stroke="${c}" stroke-width="3.600"/>`); });
out += '</g><g class="labels">';
labels.forEach(([s, x, y, z, t]) => {
  const [fs, lh, ls] = sizes[z];
  out += at(s, t.split('|').map((line, i) => {
    const en = !/[가-힣]/.test(line);
    return `<text class="${en ? 'en' : 'ko'}" x="${x - 1}" y="${y + i * lh + fs * .36}" font-size="${fs}" letter-spacing="${en ? ls : 0}"${z === 'l' ? ' opacity=".85"' : ''}>${line}</text>`;
  }).join(''));
});
out += '</g>';
// drone marker
out += `<path d="M949.500 243.500h19v20h-6l-3.500 4.500-3.500-4.500h-6z" fill="#d19b7b" stroke="#f0d9cb" stroke-width=".8"/>
<g transform="translate(959.500 254) rotate(-42)" fill="#3d1f12"><rect x="-1.200" y="-8.500" width="2.400" height="17" rx="1.200"/><rect x="-8.500" y="-3.500" width="17" height="2.800" rx="1"/><rect x="-3.500" y="5.800" width="7" height="1.700" rx=".8"/></g>`;
document.getElementById('map').innerHTML = out;
```
